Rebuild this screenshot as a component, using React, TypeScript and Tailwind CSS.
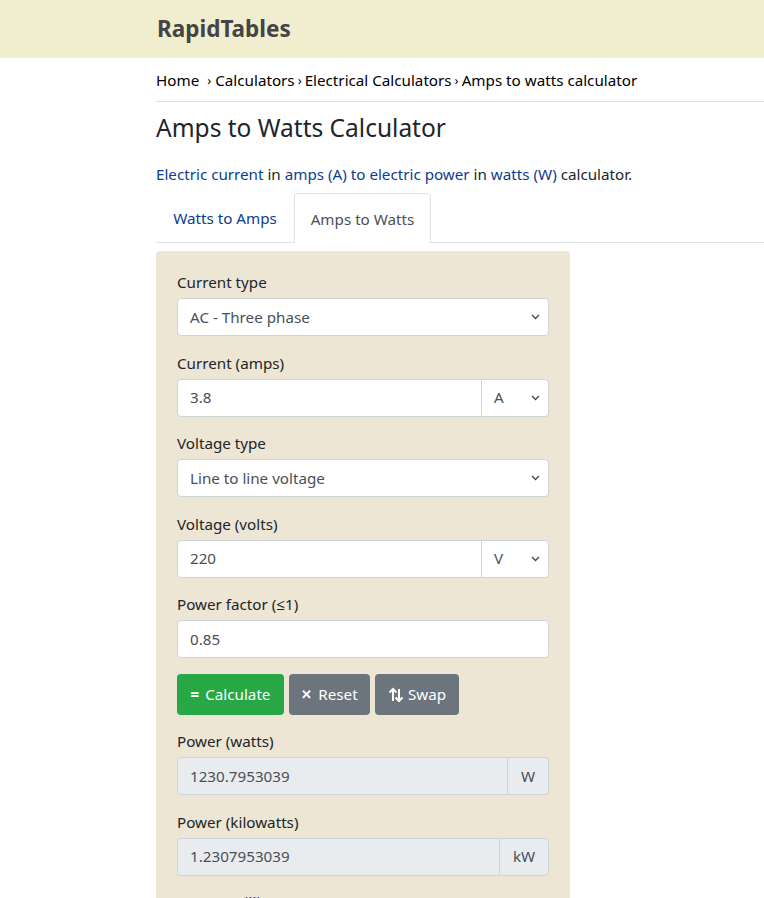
import React from "react";

const Chevron = () => (
  <svg className="pointer-events-none absolute right-[8px] top-1/2 -translate-y-1/2" width="9" height="6" viewBox="0 0 9 6">
    <path d="M1 1l3.5 3.5L8 1" fill="none" stroke="#444" strokeWidth="1.3" />
  </svg>
);

const SelectBox = ({ value, className = "" }: { value: string; className?: string }) => (
  <div className={`relative h-[38px] bg-white border border-[#ced4da] flex items-center pl-[12px] text-[#495057] ${className}`}>
    <span>{value}</span>
    <Chevron />
  </div>
);

const Label = ({ children }: { children: React.ReactNode }) => (
  <div className="h-[24px] leading-[24px] mb-[4px] text-[#212529]">{children}</div>
);

const Gap = () => <div className="h-[14.5px]" />;

export default function App() {
  return (
    <div className="min-h-[898px] bg-white text-[15.2px] text-[#212529]" style={{ fontFamily: '"Noto Sans", "Open Sans", sans-serif' }}>
      <header className="h-[58px] bg-[#f0eecf] flex items-center pl-[157px]">
        <span className="text-[22.5px] font-bold text-[#444]">RapidTables</span>
      </header>
      <div className="pl-[156px]">
        <div className="h-[44px] flex items-center border-b border-[#ddd] text-black pt-[2px]">
          <span>Home</span>
          <span className="mx-[4px] ml-[8px] text-[13px]">›</span>
          <span>Calculators</span>
          <span className="mx-[3px] text-[13px]">›</span>
          <span>Electrical Calculators</span>
          <span className="mx-[3px] text-[13px]">›</span>
          <span>Amps to watts calculator</span>
        </div>
        <h1 className="mt-[10px] text-[24.5px] leading-[32px] text-[#212529] font-normal">Amps to Watts Calculator</h1>
        <p className="mt-[18px] leading-[24px]">
          <span className="text-[#0b3d91]">Electric current</span> in <span className="text-[#0b3d91]">amps (A)</span> <span className="text-[#0b3d91]">to</span>{" "}
          <span className="text-[#0b3d91]">electric power</span> in <span className="text-[#0b3d91]">watts (W)</span> calculator.
        </p>
        <div className="mt-[7px] flex border-b border-[#dee2e6] h-[50px]">
          <div className="w-[138px] flex items-center justify-center text-[#0b3d91] pt-[2px]">Watts to Amps</div>
          <div className="w-[137px] flex items-center justify-center border border-b-0 border-[#dee2e6] rounded-t-[4px] bg-white mb-[-1px] text-[#495057] pt-[2px]">Amps to Watts</div>
        </div>
        <div className="mt-[8px] w-[414px] bg-[#ede6d4] rounded-[4px] px-[21px] pt-[19px] pb-[20px]">
          <Label>Current type</Label>
          <SelectBox value="AC - Three phase" className="rounded-[4px]" />
          <Gap />
          <Label>Current (amps)</Label>
          <div className="flex">
            <div className="flex-1 h-[38px] bg-white border border-[#ced4da] rounded-l-[4px] flex items-center pl-[12px] text-[#495057]">3.8</div>
            <SelectBox value="A" className="w-[68px] rounded-r-[4px] -ml-px" />
          </div>
          <Gap />
          <Label>Voltage type</Label>
          <SelectBox value="Line to line voltage" className="rounded-[4px]" />
          <Gap />
          <Label>Voltage (volts)</Label>
          <div className="flex">
            <div className="flex-1 h-[38px] bg-white border border-[#ced4da] rounded-l-[4px] flex items-center pl-[12px] text-[#495057]">220</div>
            <SelectBox value="V" className="w-[68px] rounded-r-[4px] -ml-px" />
          </div>
          <Gap />
          <Label>Power factor (≤1)</Label>
          <div className="h-[38px] bg-white border border-[#ced4da] rounded-[4px] flex items-center pl-[12px] text-[#495057]">0.85</div>
          <div className="mt-[16px] flex gap-[5px]">
            <button className="h-[41px] w-[107px] rounded-[4px] bg-[#28a745] text-white flex items-center justify-center">
              <span className="font-bold mr-[6px]">=</span>Calculate
            </button>
            <button className="h-[41px] w-[81px] rounded-[4px] bg-[#6c757d] text-white flex items-center justify-center">
              <span className="mr-[6px] text-[13px] font-bold">✕</span>Reset
            </button>
            <button className="h-[41px] w-[84px] rounded-[4px] bg-[#6c757d] text-white flex items-center justify-center">
              <svg width="16" height="16" viewBox="0 0 16 16" className="mr-[4px]" fill="none" stroke="white" strokeWidth="2">
                <path d="M5 14V2M1.5 5.5L5 2l3.5 3.5" />
                <path d="M11 2v12M7.5 10.5L11 14l3.5-3.5" />
              </svg>
              Swap
            </button>
          </div>
          <div className="h-[14px]" />
          <Label>Power (watts)</Label>
          <div className="flex">
            <div className="flex-1 h-[38px] bg-[#e9ecef] border border-[#ced4da] rounded-l-[4px] flex items-center pl-[12px] text-[#495057]">1230.7953039</div>
            <div className="w-[42px] -ml-px h-[38px] bg-[#e9ecef] border border-[#ced4da] rounded-r-[4px] flex items-center justify-center text-[#495057]">W</div>
          </div>
          <Gap />
          <Label>Power (kilowatts)</Label>
          <div className="flex">
            <div className="flex-1 h-[38px] bg-[#e9ecef] border border-[#ced4da] rounded-l-[4px] flex items-center pl-[12px] text-[#495057]">1.2307953039</div>
            <div className="w-[50px] -ml-px h-[38px] bg-[#e9ecef] border border-[#ced4da] rounded-r-[4px] flex items-center justify-center text-[#495057]">kW</div>
          </div>
          <Gap />
          <Label>Power (milliwatts)</Label>
          <div className="flex">
            <div className="flex-1 h-[38px] bg-[#e9ecef] border border-[#ced4da] rounded-l-[4px] flex items-center pl-[12px] text-[#495057]">1230795.3039</div>
            <div className="w-[50px] -ml-px h-[38px] bg-[#e9ecef] border border-[#ced4da] rounded-r-[4px] flex items-center justify-center text-[#495057]">mW</div>
          </div>
        </div>
      </div>
    </div>
  );
}
